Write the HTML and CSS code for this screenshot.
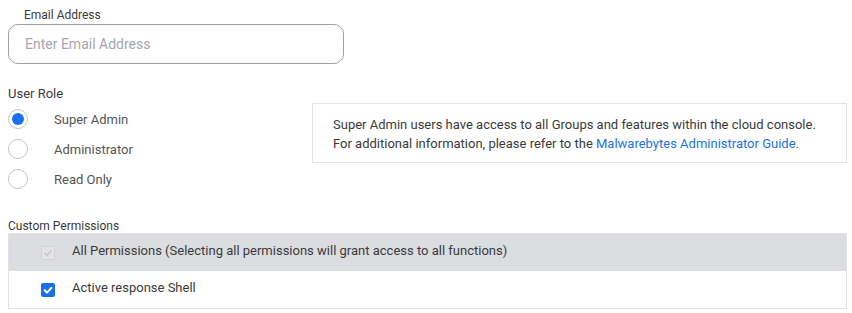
FILE: index.html
```html
<!DOCTYPE html>
<html>
<head>
<meta charset="utf-8">
<link rel="stylesheet" href="styles.css">
</head>
<body>
<div class="page">
  <div class="field">
    <label class="field-label">Email Address</label>
    <input class="text-input" type="text" placeholder="Enter Email Address">
  </div>

  <div class="section-label role-label">User Role</div>
  <div class="role-row">
    <div class="radio-list">
      <div class="radio-item"><span class="radio checked"></span><span class="radio-text">Super Admin</span></div>
      <div class="radio-item"><span class="radio"></span><span class="radio-text">Administrator</span></div>
      <div class="radio-item"><span class="radio"></span><span class="radio-text">Read Only</span></div>
    </div>
    <div class="info-box">
      <p>Super Admin users have access to all Groups and features within the cloud console.</p>
      <p>For additional information, please refer to the <a class="link" href="#">Malwarebytes Administrator Guide.</a></p>
    </div>
  </div>

  <div class="section-label perm-label">Custom Permissions</div>
  <div class="perm-table">
    <div class="perm-row header">
      <span class="checkbox disabled"><svg viewBox="0 0 14 14" width="14" height="14"><path d="M3.8 7.2 L6 9.3 L10.2 4.9" fill="none" stroke="#c9c9cc" stroke-width="1.6" stroke-linecap="round" stroke-linejoin="round"/></svg></span>
      <span class="perm-text">All Permissions (Selecting all permissions will grant access to all functions)</span>
    </div>
    <div class="perm-row">
      <span class="checkbox checked"><svg viewBox="0 0 14 14" width="14" height="14"><path d="M3.6 7.3 L6 9.6 L10.4 4.9" fill="none" stroke="#fff" stroke-width="2" stroke-linecap="round" stroke-linejoin="round"/></svg></span>
      <span class="perm-text">Active response Shell</span>
    </div>
  </div>
</div>
</body>
</html>
```
FILE: styles.css
```css
* { box-sizing: border-box; }
html, body { margin: 0; padding: 0; background: #fff; }
body { font-family: Roboto, "Liberation Sans", Arial, sans-serif; color: #3a3a3a; }
.page { padding: 8px 5px 0 8px; }

.field { display: flex; flex-direction: column; width: 336px; }
.field-label { font-size: 12px; line-height: 14px; padding-left: 16px; color: #3a3a3a; margin-bottom: 2px; }
.text-input {
  height: 40px; width: 336px; border: 1px solid #9e9ea6; border-radius: 10px;
  padding: 0 16px; font-family: inherit; font-size: 14px; color: #333; outline: none;
}
.text-input::placeholder { color: #a6a6ae; }

.section-label { font-size: 13px; line-height: 16px; color: #3a3a3a; }
.role-label { margin-top: 22px; }

.role-row { display: flex; align-items: flex-start; margin-top: 1px; }
.radio-list { width: 304px; display: flex; flex-direction: column; padding-top: 1px; }
.radio-item { height: 30px; display: flex; align-items: center; }
.radio {
  width: 20px; height: 20px; border-radius: 50%; border: 1px solid #c4c4c8;
  background: #fff; flex: none; position: relative; margin-right: 26px;
}
.radio.checked::after {
  content: ""; position: absolute; left: 3px; top: 3px; width: 12px; height: 12px;
  border-radius: 50%; background: #1a6ff0;
}
.radio-text { font-size: 13px; color: #555; }

.info-box {
  width: 535px; height: 60px; border: 1px solid #e2e2e4;
  padding: 11px 20px 9px; font-size: 13px; line-height: 19px; color: #3a3a3a;
}
.info-box p { margin: 0; }
.link { color: #1a73e8; text-decoration: none; }

.perm-label { margin-top: 25px; font-size: 12px; line-height: 14px; }
.perm-table { width: 839px; border: 1px solid #e2e2e4; }
.perm-row { display: flex; align-items: center; height: 37px; padding-left: 32px; background: #fff; }
.perm-row.header { background: #dcdde1; height: 37px; }
.checkbox { width: 14px; height: 14px; border-radius: 2px; flex: none; margin-right: 17px; display: flex; }
.checkbox.disabled { background: #e4e4e7; border: 1px solid #d3d3d6; }
.checkbox.disabled svg { margin: -1px; }
.checkbox.checked { background: #1a6ff0; }
.perm-text { font-size: 13px; color: #3a3a3a; padding-bottom: 5px; }
```
